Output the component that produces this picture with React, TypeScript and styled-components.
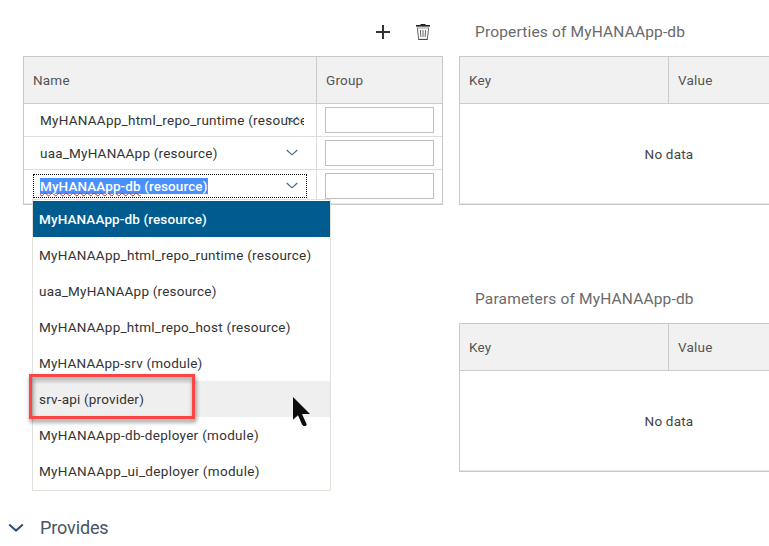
import React from "react";
import styled, { createGlobalStyle, css } from "styled-components";

const GlobalStyle = createGlobalStyle`
  * { box-sizing: border-box; }
  html, body { margin: 0; background: #fff; overflow: hidden; }
  body { font-family: Roboto, "Noto Sans", sans-serif; font-size: 13.5px; color: #333; }
`;

const Page = styled.main`
  position: relative;
  width: 769px;
  height: 546px;
  overflow: hidden;
  display: flex;
  flex-direction: column;
`;

const Columns = styled.div`
  display: grid;
  grid-template-columns: 420px 420px;
  column-gap: 16px;
  padding-left: 23px;
  height: 507px;
`;

const Toolbar = styled.div`
  height: 56px;
  display: flex;
  justify-content: flex-end;
  align-items: flex-start;
  gap: 24px;
  padding: 24px 12px 0 0;
`;

const IconButton = styled.button`
  width: 16px;
  height: 16px;
  padding: 0;
  border: 0;
  background: none;
  display: block;
  svg { display: block; }
`;

const Section = styled.section`
  height: 267px;
`;

const Title = styled.h3`
  margin: 0;
  height: 56px;
  padding: 7px 0 0 16px;
  font-size: 15.5px;
  line-height: 50px;
  font-weight: 400;
  color: #6a6a6a;
  white-space: nowrap;
  letter-spacing: 0.16px;
`;

const Table = styled.div`
  border: 1px solid #c8c8c8;
  box-shadow: inset 0 -1px 0 #e5e5e5;
  height: 149px;
`;

const HeaderRow = styled.div<{ $first: number }>`
  display: grid;
  grid-template-columns: ${(p) => p.$first}px 1fr;
  height: 47px;
  background: #f1f1f1;
  border-bottom: 1px solid #ccc;
`;

const HeaderCell = styled.div`
  padding-left: 9px;
  line-height: 47px;
  color: #555;
  letter-spacing: 0.2px;
  & + & { border-left: 1px solid #ccc; }
`;

const Empty = styled.div`
  height: 99px;
  line-height: 101px;
  text-align: center;
  color: #444;
  letter-spacing: 0.2px;
`;

const Row = styled.div`
  display: grid;
  grid-template-columns: 292px 1fr;
  height: 33px;
  border-bottom: 1px solid #ddd;
  &:last-child { border-bottom-color: transparent; }
`;

const NameCell = styled.div`
  padding: 4px 0 0 9px;
`;

const GroupCell = styled.div`
  border-left: 1px solid #ddd;
  padding: 3px 0 0 8px;
`;

const GroupInput = styled.input`
  display: block;
  width: 109px;
  height: 26px;
  border: 1px solid #bfbfbf;
  background: #fff;
  outline: 0;
`;

const Combo = styled.div<{ $focused?: boolean }>`
  position: relative;
  width: 274px;
  height: 24px;
  display: flex;
  align-items: center;
  padding: 0 2px 0 6px;
  border: 1px ${(p) => (p.$focused ? "dotted #000" : "solid transparent")};
`;

const ComboText = styled.span<{ $selected?: boolean; $spacing: number }>`
  height: 16px;
  line-height: 16px;
  white-space: nowrap;
  overflow: hidden;
  letter-spacing: ${(p) => p.$spacing}px;
  ${(p) => p.$selected && css`
    overflow: visible;
    background: #4a90ff;
    color: #fff;
    font-weight: 500;
  `}
`;

const Misspelled = styled.span`
  text-decoration: underline wavy #e8222e 1px;
  text-decoration-skip-ink: none;
  text-underline-offset: 0.5px;
`;

const ComboArrow = styled.svg`
  position: absolute;
  right: 8px;
  top: 7px;
`;

const Popup = styled.ul`
  position: absolute;
  left: 32px;
  top: 199px;
  width: 299px;
  height: 292px;
  margin: 0;
  padding: 1px 0;
  list-style: none;
  background: #fff;
  border: 1px solid #e1e1d9;
`;

const Option = styled.li<{ $state?: "selected" | "hover"; $spacing: number }>`
  height: 36px;
  line-height: 36px;
  padding-left: 6px;
  white-space: nowrap;
  letter-spacing: ${(p) => p.$spacing}px;
  ${(p) => p.$state === "selected" && css`background: #005b8f; color: #fff; font-weight: 500;`}
  ${(p) => p.$state === "hover" && css`background: #efefef;`}
`;

const Highlight = styled.div`
  position: absolute;
  left: 29px;
  top: 374px;
  width: 166px;
  height: 45px;
  border: 3px solid #fb4444;
  filter: drop-shadow(1px 3px 2px rgba(0, 0, 0, 0.5));
`;

const Pointer = styled.svg`
  position: absolute;
  left: 292px;
  top: 396px;
`;

const Provides = styled.div`
  display: flex;
  align-items: center;
  height: 39px;
  padding: 2px 0 0 8px;
  gap: 16px;
  color: #475565;
  font-size: 18px;
  line-height: 22px;
  letter-spacing: -0.12px;
`;

const ProvidesLabel = styled.span`
  margin-top: 1px;
`;

const names = [
  { text: "MyHANAApp_html_repo_runtime (resource)", spacing: 0.26 },
  { text: "uaa_MyHANAApp (resource)", spacing: 0.21 },
];

const options: { text: string; spacing: number; state?: "selected" | "hover" }[] = [
  { text: "MyHANAApp-db (resource)", spacing: 0.12, state: "selected" },
  { text: "MyHANAApp_html_repo_runtime (resource)", spacing: 0.26 },
  { text: "uaa_MyHANAApp (resource)", spacing: 0.21 },
  { text: "MyHANAApp_html_repo_host (resource)", spacing: 0.25 },
  { text: "MyHANAApp-srv (module)", spacing: 0.21 },
  { text: "srv-api (provider)", spacing: 0.19, state: "hover" },
  { text: "MyHANAApp-db-deployer (module)", spacing: 0.3 },
  { text: "MyHANAApp_ui_deployer (module)", spacing: 0.32 },
];

const Arrow = () => (
  <ComboArrow width="12" height="8" viewBox="0 0 12 8" fill="none" stroke="#40607f" strokeWidth="1.1">
    <path d="M.7 1 6 5.8 11.3 1" />
  </ComboArrow>
);

const DataSection = ({ title }: { title: string }) => (
  <Section>
    <Title>{title}</Title>
    <Table>
      <HeaderRow $first={208}>
        <HeaderCell>Key</HeaderCell>
        <HeaderCell>Value</HeaderCell>
      </HeaderRow>
      <Empty>No data</Empty>
    </Table>
  </Section>
);

export default function App() {
  return (
    <Page>
      <GlobalStyle />
      <Columns>
        <div>
          <Toolbar>
            <IconButton aria-label="Add">
              <svg width="16" height="16" viewBox="0 0 16 16" fill="none" stroke="#333" strokeWidth="2">
                <path d="M8 1v14M1 8h14" />
              </svg>
            </IconButton>
            <IconButton aria-label="Delete">
              <svg width="16" height="17" viewBox="0 0 16 17" fill="none" stroke="#666">
                <path d="M1 1.8h14" stroke="#222" strokeWidth="1.6" />
                <path d="M5.5.6h5" stroke="#222" strokeWidth="1.2" />
                <path d="M2.3 3.5 3.7 15.4" />
                <path d="M13.7 3.5 12.3 15.4" />
                <path d="M2.3 4h11.4" stroke="#999" />
                <path d="M3.4 15.4h9.2" stroke="#333" />
                <path d="m5.4 6 .5 7M8 6v7M10.6 6l-.5 7" />
              </svg>
            </IconButton>
          </Toolbar>
          <Table>
            <HeaderRow $first={292}>
              <HeaderCell>Name</HeaderCell>
              <HeaderCell>Group</HeaderCell>
            </HeaderRow>
            {names.map((n) => (
              <Row key={n.text}>
                <NameCell>
                  <Combo>
                    <ComboText $spacing={n.spacing}>{n.text}</ComboText>
                    <Arrow />
                  </Combo>
                </NameCell>
                <GroupCell><GroupInput /></GroupCell>
              </Row>
            ))}
            <Row>
              <NameCell>
                <Combo $focused>
                  <ComboText $selected $spacing={0.1}>
                    <Misspelled>MyHANAApp-db</Misspelled> (resource)
                  </ComboText>
                  <Arrow />
                </Combo>
              </NameCell>
              <GroupCell><GroupInput /></GroupCell>
            </Row>
          </Table>
        </div>
        <div>
          <DataSection title="Properties of MyHANAApp-db" />
          <DataSection title="Parameters of MyHANAApp-db" />
        </div>
      </Columns>
      <Provides>
        <svg width="16" height="10" viewBox="0 0 16 10" fill="none" stroke="#34506e" strokeWidth="2">
          <path d="m1.2 1.4 6.8 6.2 6.8-6.2" />
        </svg>
        <ProvidesLabel>Provides</ProvidesLabel>
      </Provides>
      <Popup>
        {options.map((o) => (
          <Option key={o.text} $state={o.state} $spacing={o.spacing}>{o.text}</Option>
        ))}
      </Popup>
      <Highlight />
      <Pointer width="20" height="32" viewBox="0 0 20 32" fill="#0c0c0c">
        <path d="M1 1v22.8l5-4.6L10 28.6l1.4 1.4h2.4l1-1.4-4.6-10V18H18Z" />
      </Pointer>
    </Page>
  );
}
